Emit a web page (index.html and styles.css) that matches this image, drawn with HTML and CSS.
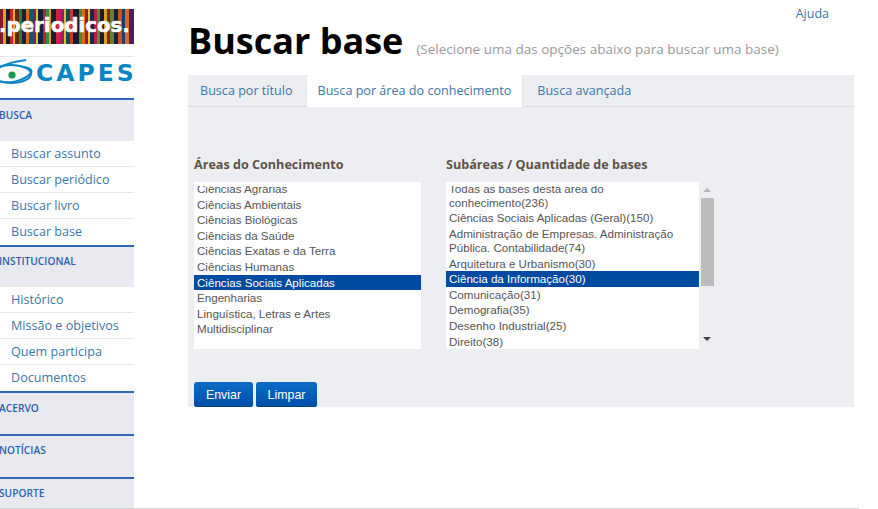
FILE: index.html
```html
<html lang="pt">
<head>
    <meta charset="utf-8">
    <title>Buscar base</title>
    <link rel="stylesheet" href="styles.css">
</head>
<body>
    <div class="sidebar">
        <div class="banner"><span class="banner-text">.periodicos.</span></div>
        <div class="capes">
            <svg class="capes-eye" viewBox="0 0 34 28" width="34" height="28">
                <ellipse cx="11" cy="15" rx="20" ry="9" fill="none" stroke="#0a86c4" stroke-width="2"/>
                <path d="M-6 12C4 4 18 2 26 1M-4 21C8 26 24 22 31 14C33 10 28 8 22 8" fill="none" stroke="#0a86c4" stroke-width="2"/>
                <circle cx="12" cy="16" r="3.6" fill="#129a52"/>
            </svg>
            <span class="capes-text">CAPES</span>
        </div>
        <div class="menu-head">BUSCA</div>
        <a class="menu-item">Buscar assunto</a>
        <a class="menu-item">Buscar periódico</a>
        <a class="menu-item">Buscar livro</a>
        <a class="menu-item">Buscar base</a>
        <div class="menu-head short">INSTITUCIONAL</div>
        <a class="menu-item">Histórico</a>
        <a class="menu-item">Missão e objetivos</a>
        <a class="menu-item">Quem participa</a>
        <a class="menu-item">Documentos</a>
        <div class="menu-head">ACERVO</div>
        <div class="menu-head tight">NOTÍCIAS</div>
        <div class="menu-head tight last">SUPORTE</div>
    </div>

    <div class="main">
        <div class="help"><a>Ajuda</a></div>
        <div class="title-row">
            <h1>Buscar base</h1>
            <span class="subtitle">(Selecione uma das opções abaixo para buscar uma base)</span>
        </div>
        <div class="panel">
            <div class="tabs">
                <a class="tab">Busca por título</a>
                <a class="tab active">Busca por área do conhecimento</a>
                <a class="tab">Busca avançada</a>
            </div>
            <div class="columns">
                <div class="col-areas">
                    <h4>Áreas do Conhecimento</h4>
                    <div class="listbox">
                        <ul class="options">
                            <li>Ciências Agrárias</li>
                            <li>Ciências Ambientais</li>
                            <li>Ciências Biológicas</li>
                            <li>Ciências da Saúde</li>
                            <li>Ciências Exatas e da Terra</li>
                            <li>Ciências Humanas</li>
                            <li class="selected">Ciências Sociais Aplicadas</li>
                            <li>Engenharias</li>
                            <li>Linguística, Letras e Artes</li>
                            <li>Multidisciplinar</li>
                        </ul>
                    </div>
                </div>
                <div class="col-sub">
                    <h4>Subáreas / Quantidade de bases</h4>
                    <div class="list-wrap">
                        <div class="listbox wide">
                            <ul class="options">
                                <li>Todas as bases desta área do conhecimento(236)</li>
                                <li>Ciências Sociais Aplicadas (Geral)(150)</li>
                                <li>Administração de Empresas. Administração Pública. Contabilidade(74)</li>
                                <li>Arquitetura e Urbanismo(30)</li>
                                <li class="selected">Ciência da Informação(30)</li>
                                <li>Comunicação(31)</li>
                                <li>Demografia(35)</li>
                                <li>Desenho Industrial(25)</li>
                                <li>Direito(38)</li>
                            </ul>
                        </div>
                        <div class="scrollbar">
                            <span class="arrow-up"></span>
                            <span class="thumb"></span>
                            <span class="arrow-down"></span>
                        </div>
                    </div>
                </div>
            </div>
            <div class="buttons">
                <button class="btn">Enviar</button>
                <button class="btn limpar">Limpar</button>
            </div>
        </div>
    </div>
</body>
</html>
```

FILE: styles.css
```css
html, body {
    height: 100%;
}
body {
    margin: 0;
    width: 859px;
    height: 509px;
    overflow: hidden;
    display: flex;
    font-family: "Open Sans", sans-serif;
    background-color: #fff;
    box-shadow: inset 0 -1px 0 #d4d4d4;
}
a {
    color: #3b77a8;
    text-decoration: none;
}

/* sidebar */
.sidebar {
    width: 134px;
    flex-shrink: 0;
    padding-top: 9px;
}
.banner {
    height: 35px;
    overflow: hidden;
    background: linear-gradient(90deg,
        #7b1c2e 0 3px, #e0a020 3px 6px, #1a1a2a 6px 10px, #c8242c 10px 13px,
        #e8b020 13px 15px, #5d2a1a 15px 19px, #2c7a3c 19px 22px, #1b1f3a 22px 26px,
        #d86a1c 26px 29px, #0e5a6c 29px 33px, #7a1f6a 33px 36px, #e0c030 36px 38px,
        #14233c 38px 43px, #b8242c 43px 46px, #3a8a3c 46px 49px, #d8a020 49px 51px,
        #1c1c2c 51px 56px, #d01c4c 56px 61px, #7c2a70 61px 64px, #e8b830 64px 66px,
        #174a4a 66px 70px, #c83a2a 70px 73px, #161a2a 73px 79px, #4a8a2c 79px 82px,
        #d86a1c 82px 85px, #9c1c2c 85px 88px, #e8c030 88px 90px, #122a4c 90px 94px,
        #b81c4c 94px 97px, #5c8a2c 97px 100px, #1c1c2c 100px 104px, #d8a020 104px 107px,
        #7c2a1c 107px 110px, #6a7c30 110px 114px, #14233c 114px 118px, #c8541c 118px 122px,
        #1a3c6c 122px 125px, #d86a2c 125px 129px, #4c1c5c 129px 134px);
}
.banner-text {
    display: block;
    margin-left: -1px;
    font-family: "DejaVu Sans", sans-serif;
    font-weight: 700;
    font-size: 19.8px;
    line-height: 34px;
    white-space: nowrap;
    color: #fff;
    -webkit-text-stroke: 0.5px #fff;
}
.capes {
    height: 26px;
    margin-top: 12px;
    padding-top: 3px;
    margin-bottom: 12px;
    border-top: 1px solid #e6e6e6;
    display: flex;
    align-items: center;
    overflow: hidden;
}
.capes-eye {
    flex-shrink: 0;
}
.capes-text {
    margin-left: 2px;
    font-family: "DejaVu Sans", sans-serif;
    font-weight: 700;
    font-size: 23.5px;
    line-height: 26px;
    letter-spacing: 3px;
    color: #0a86c4;
}
.menu-head {
    height: 41px;
    border-top: 2px solid #2f66b8;
    background-color: #e9eaef;
    font-size: 10.2px;
    font-weight: 600;
    line-height: 30px;
    text-indent: -1px;
    color: #2f5fae;
    white-space: nowrap;
    overflow: hidden;
}
.menu-head.short {
    height: 40px;
    line-height: 28px;
}
.menu-head.tight {
    line-height: 28px;
}
.menu-head.last {
    height: 29px;
}
.menu-item {
    display: block;
    height: 25px;
    padding-left: 11px;
    font-size: 12.6px;
    line-height: 26px;
    border-bottom: 1px solid #e6e6e6;
}
.menu-item:has(+ .menu-head) {
    border-bottom: 0;
    height: 26px;
}

/* main */
.main {
    margin-left: 54px;
    width: 666px;
}
.help {
    height: 20px;
    padding: 5px 25px 0 0;
    text-align: right;
    font-size: 12.5px;
    line-height: 18px;
}
.title-row {
    display: flex;
    align-items: baseline;
    height: 50px;
}
h1 {
    margin: 0 13px 0 0;
    font-size: 36px;
    font-weight: 700;
    line-height: 32px;
    color: #000;
}
.subtitle {
    font-size: 13.5px;
    color: #9a9a9a;
}
.panel {
    background-color: #eceef2;
    height: 332px;
}
.tabs {
    display: flex;
    height: 31px;
    border-bottom: 1px solid #d8dbe0;
}
.tab {
    height: 31px;
    margin-right: 1px;
    padding: 0 12px;
    font-size: 12.6px;
    line-height: 32px;
}
.tab.active {
    background-color: #fff;
    height: 32px;
    margin-right: 2px;
    border-radius: 3px 3px 0 0;
    border-left: 1px solid #e2e4e8;
    border-right: 1px solid #e2e4e8;
    padding: 0 11px;
}
.columns {
    display: flex;
    padding: 49px 0 0 6px;
}
.col-areas {
    width: 252px;
}
h4 {
    margin: 0 0 8px;
    font-size: 12.6px;
    font-weight: 700;
    line-height: 18px;
    color: #5d5348;
}
.list-wrap {
    display: flex;
}
.listbox {
    box-sizing: border-box;
    width: 227px;
    height: 167px;
    padding-top: 4px;
    background-color: #fff;
    font-family: "Liberation Sans", Arial, sans-serif;
    font-size: 11.6px;
    color: #555;
}
.listbox.wide {
    width: 253px;
}
.options {
    list-style: none;
    height: 163px;
    margin: 0;
    padding: 0;
    overflow: hidden;
}
.options li {
    padding: 0 3px;
    line-height: 15.6px;
}
.options li:first-child {
    margin-top: -5px;
}
.wide .options li {
    padding: 0.8px 3px;
    line-height: 14px;
}
.options .selected {
    background-color: #004a9f;
    color: #fff;
}
.scrollbar {
    width: 16px;
    height: 167px;
    display: flex;
    flex-direction: column;
    align-items: center;
}
.arrow-up, .arrow-down {
    width: 0;
    height: 0;
    border-left: 4px solid transparent;
    border-right: 4px solid transparent;
}
.arrow-up {
    margin-top: 6px;
    border-bottom: 4px solid #b5b5b5;
}
.arrow-down {
    margin-top: 51px;
    border-top: 4px solid #444;
}
.thumb {
    width: 13px;
    height: 88px;
    margin-top: 6px;
    background-color: #bcbcbc;
}
.buttons {
    display: flex;
    gap: 3px;
    padding: 33px 0 0 6px;
}
.btn {
    width: 59px;
    height: 25px;
    padding: 0;
    border: 0;
    border-radius: 3px;
    background: linear-gradient(#0a6cc8, #004ea6);
    box-shadow: inset 0 -1px 0 #00408c;
    color: #fff;
    font-family: "Liberation Sans", Arial, sans-serif;
    font-size: 12.4px;
}
.btn.limpar {
    width: 61px;
}
```
